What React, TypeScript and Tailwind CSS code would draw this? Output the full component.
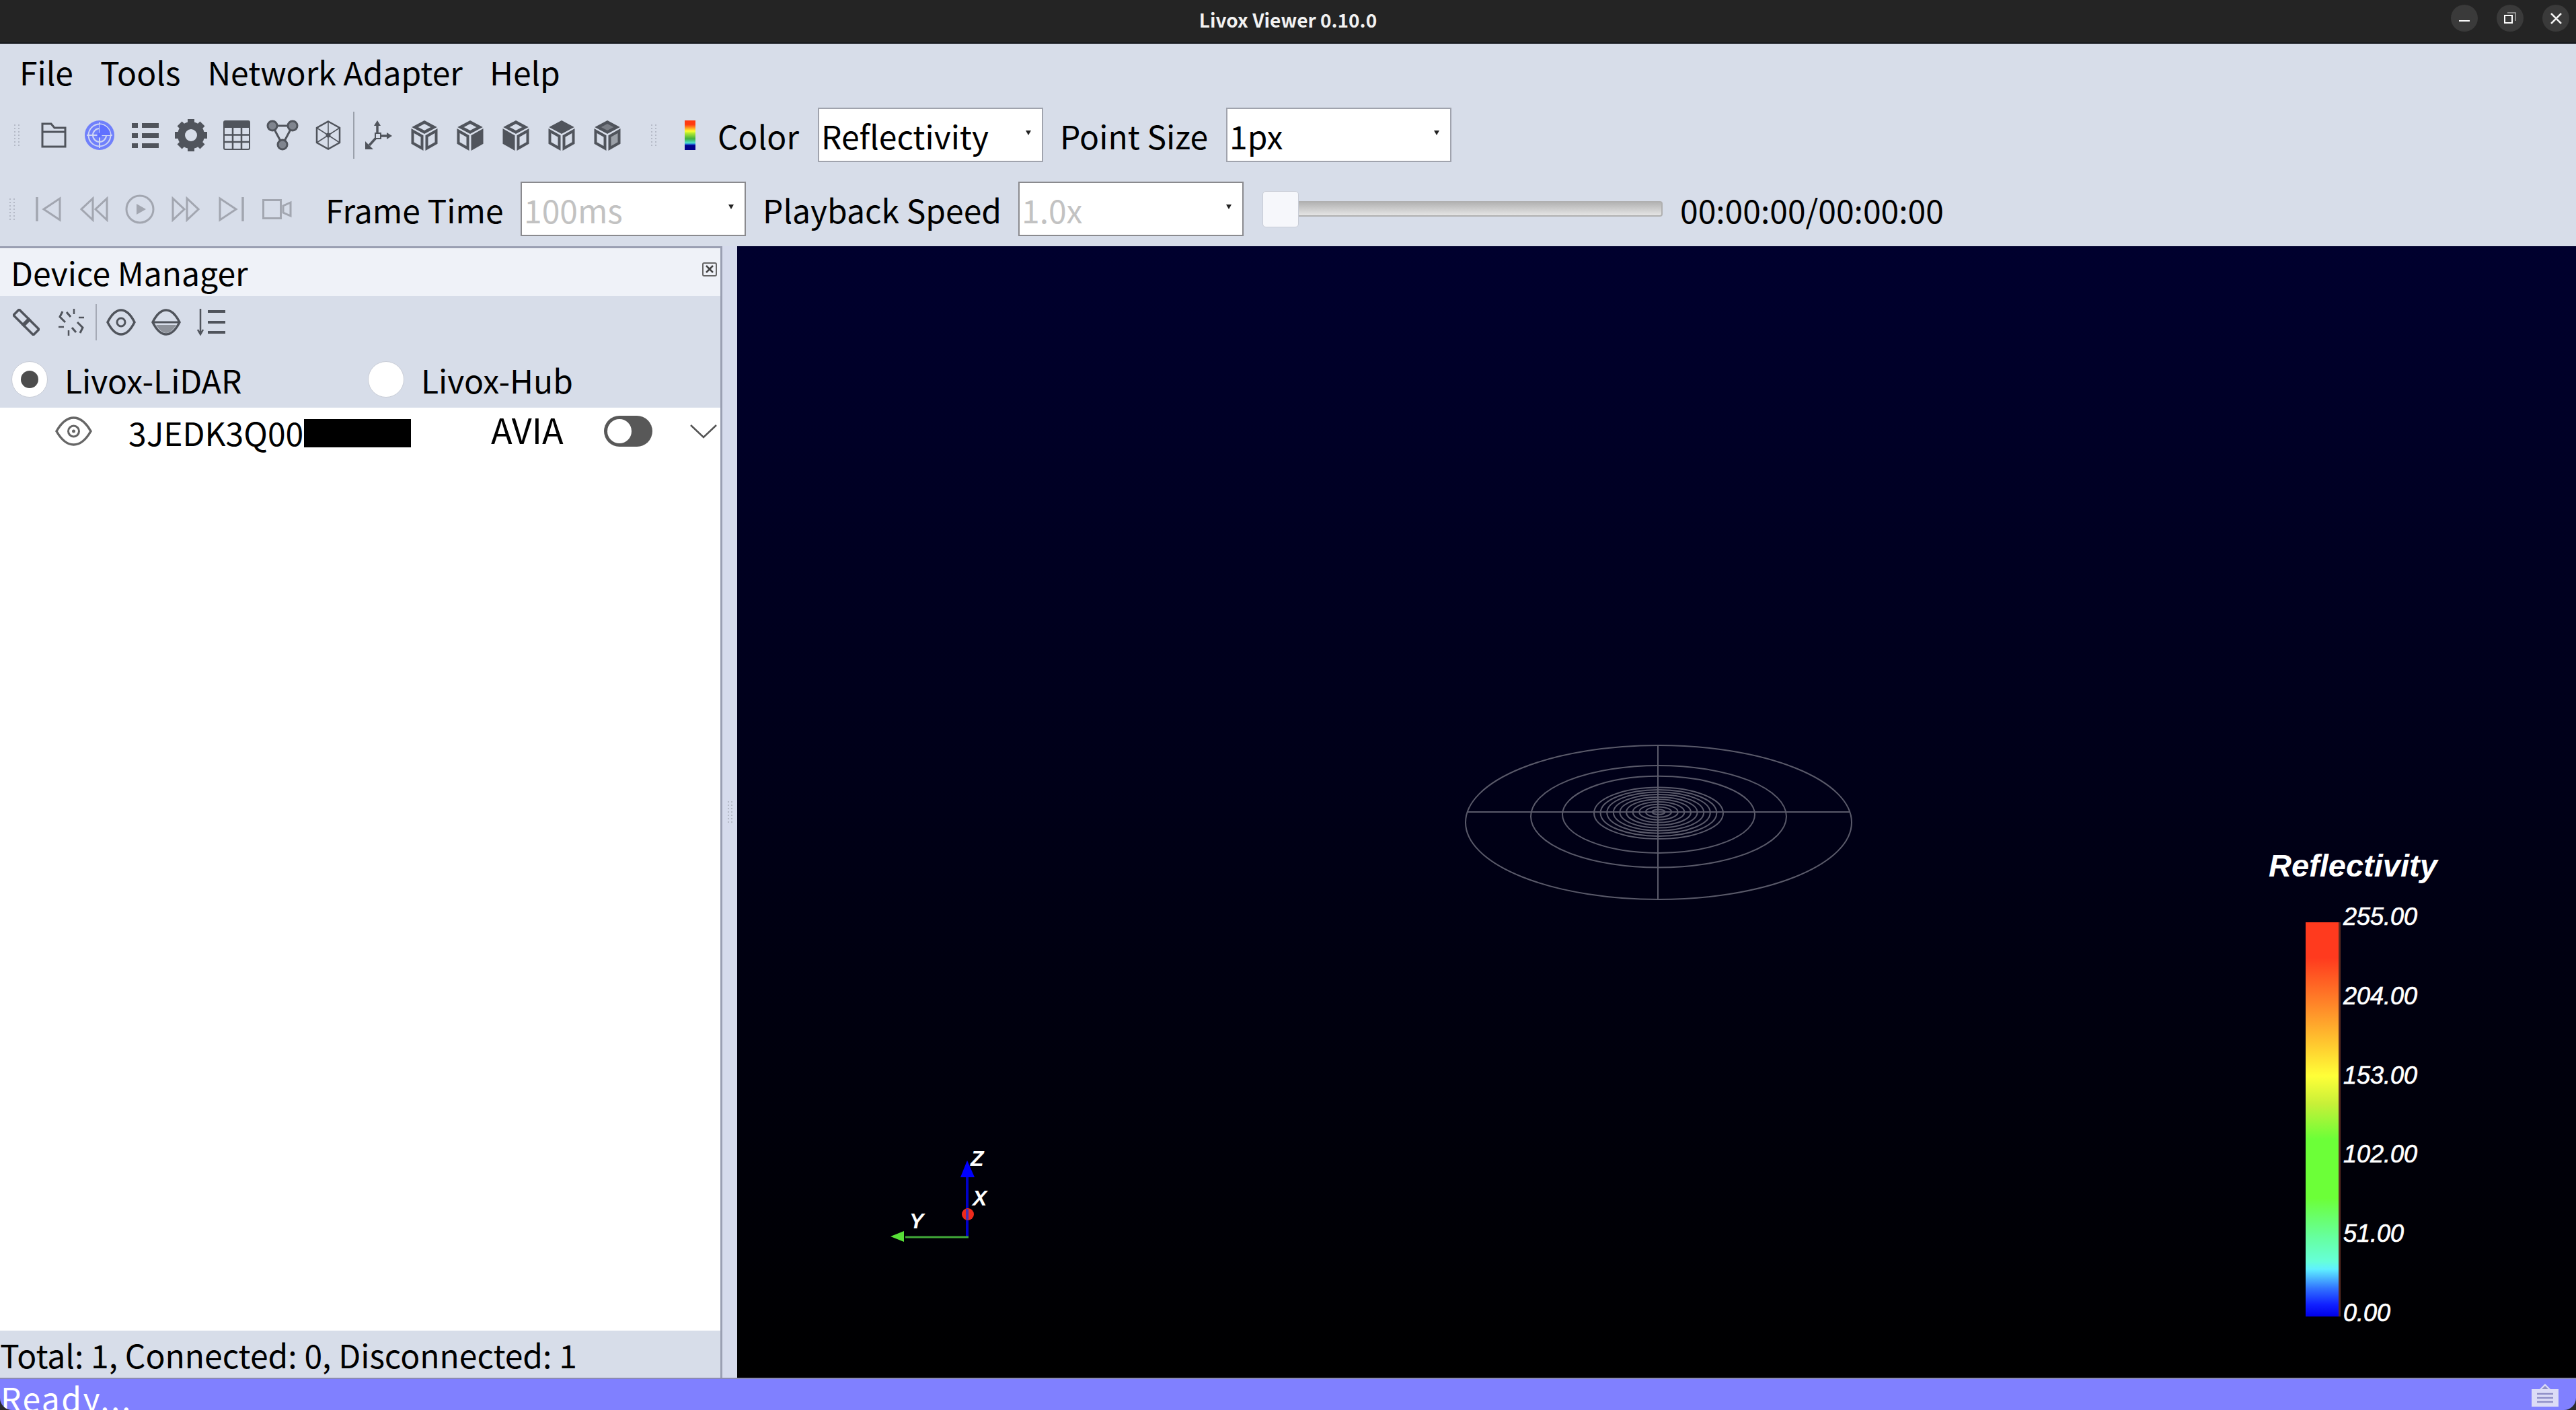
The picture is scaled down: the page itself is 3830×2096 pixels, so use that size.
import React from "react";

const D = "#50545c";
const G = "#a2a6b0";

function Svg({ w, h, children, className }: { w: number; h: number; children: React.ReactNode; className?: string }) {
  return (
    <svg width={w} height={h} viewBox={`0 0 ${w} ${h}`} fill="none" className={className}>
      {children}
    </svg>
  );
}

const Folder = () => (
  <Svg w={38} h={38}>
    <path d="M2 2H15L20 8H36V36H2Z M2 14H36" stroke={D} strokeWidth="3" />
  </Svg>
);
const Radar = () => (
  <Svg w={44} h={44}>
    <circle cx="22" cy="22" r="22" fill="#7080fb" />
    <circle cx="22" cy="22" r="16.5" stroke="#cfd6f4" strokeWidth="2" />
    <circle cx="22" cy="22" r="10" stroke="#cfd6f4" strokeWidth="2" />
    <path d="M22 3V41M3 22H41" stroke="#cfd6f4" strokeWidth="2" />
    <path d="M22 6A16 16 0 0 1 38 22H22Z" fill="#6070ff" />
    <circle cx="22" cy="22" r="3.5" fill="#6070ff" />
  </Svg>
);
const ListIcon = () => (
  <Svg w={40} h={38}>
    {[1, 16, 31].map((y) => (
      <g key={y} fill={D}>
        <rect x="0" y={y} width="9" height="7" />
        <rect x="15" y={y} width="25" height="7" />
      </g>
    ))}
  </Svg>
);
const Gear = () => (
  <Svg w={48} h={48}>
    {[0, 45, 90, 135, 180, 225, 270, 315].map((a) => (
      <rect key={a} x="19" y="0" width="10" height="12" fill={D} transform={`rotate(${a} 24 24)`} />
    ))}
    <circle cx="24" cy="24" r="14.5" stroke={D} strokeWidth="11" />
  </Svg>
);
const Table = () => (
  <Svg w={40} h={44}>
    <rect x="1" y="1" width="38" height="42" rx="2" stroke={D} strokeWidth="2" />
    <rect x="1" y="1" width="38" height="10" fill={D} />
    <path d="M14 11V43M27 11V43M1 21.5H39M1 32H39" stroke={D} strokeWidth="2.5" />
  </Svg>
);
const Net = () => (
  <Svg w={48} h={46}>
    <path d="M9 9H39L24 37Z" stroke={D} strokeWidth="3" />
    <circle cx="9" cy="9" r="7" stroke={D} strokeWidth="3" fill="#80858f" />
    <circle cx="39" cy="9" r="7" stroke={D} strokeWidth="3" fill="#80858f" />
    <circle cx="24" cy="37" r="7" stroke={D} strokeWidth="3" fill="#80858f" />
  </Svg>
);
const Hex = () => (
  <Svg w={38} h={44}>
    <path d="M19 1.5L36 11V33L19 42.5L2 33V11Z" stroke={D} strokeWidth="2.5" />
    <path d="M19 1.5V42.5M2 11L36 33M36 11L2 33" stroke={D} strokeWidth="1.5" />
    <circle cx="19" cy="22" r="3.5" fill={D} />
  </Svg>
);
const Axes3 = () => (
  <Svg w={40} h={44}>
    <path d="M18 6V19M22 23H34M16 26L6 37" stroke={D} strokeWidth="3.5" />
    <path d="M18 0L23 8H13Z M40 23L32 18V28Z M0 43V31L12 43Z" fill={D} />
    <rect x="15" y="19" width="8" height="8" stroke={D} strokeWidth="2" />
  </Svg>
);
function Cube({ v }: { v: "none" | "right" | "left" | "top" | "mix" }) {
  return (
    <Svg w={40} h={46}>
      <path
        d="M20 3.5L34 11L20 18.5L6 11Z"
        stroke={D}
        strokeWidth="4.5"
        fill={v === "top" ? D : v === "mix" ? "#7a7e86" : "none"}
      />
      <path d="M2.5 16.5L16.5 24.5V42.5L2.5 34.5Z" stroke={D} strokeWidth="4" fill={v === "left" ? D : "none"} />
      <path d="M37.5 16.5L23.5 24.5V42.5L37.5 34.5Z" stroke={D} strokeWidth="4" fill={v === "right" ? D : v === "mix" ? "#9ba0a8" : "none"} />
    </Svg>
  );
}
const SkipStart = () => (
  <Svg w={38} h={38}>
    <path d="M2 1V37" stroke={G} strokeWidth="3.5" />
    <path d="M36 3V35L12 19Z" stroke={G} strokeWidth="3" />
  </Svg>
);
const Rewind = () => (
  <Svg w={42} h={38}>
    <path d="M19 3V35L2 19Z M40 3V35L23 19Z" stroke={G} strokeWidth="3" />
  </Svg>
);
const Play = () => (
  <Svg w={44} h={44}>
    <circle cx="22" cy="22" r="20" stroke={G} strokeWidth="3" />
    <path d="M17 14L31 22L17 30Z" fill={G} />
  </Svg>
);
const Forward = () => (
  <Svg w={42} h={38}>
    <path d="M2 3V35L19 19Z M23 3V35L40 19Z" stroke={G} strokeWidth="3" />
  </Svg>
);
const SkipEnd = () => (
  <Svg w={38} h={38}>
    <path d="M36 1V37" stroke={G} strokeWidth="3.5" />
    <path d="M2 3V35L26 19Z" stroke={G} strokeWidth="3" />
  </Svg>
);
const Camera = () => (
  <Svg w={44} h={30}>
    <rect x="1.5" y="1.5" width="26" height="27" stroke={G} strokeWidth="3" />
    <path d="M42 5V25L31 20V10Z" stroke={G} strokeWidth="3" />
  </Svg>
);
const Link = () => (
  <Svg w={40} h={40}>
    <rect x="2" y="7" width="22" height="12" transform="rotate(45 13 13)" stroke={D} strokeWidth="3.5" />
    <rect x="16" y="21" width="22" height="12" transform="rotate(45 27 27)" stroke={D} strokeWidth="3.5" />
  </Svg>
);
const Unlink = () => (
  <Svg w={40} h={40}>
    <path d="M7 4L3 12L11 20M19 12L13 5" stroke={D} strokeWidth="3" />
    <path d="M33 36L37 28L29 20M21 28L27 35" stroke={D} strokeWidth="3" />
    <path d="M24 0V8M39 13H31M1 27H9M16 32V40" stroke={D} strokeWidth="2.5" />
  </Svg>
);
const EyeSmall = ({ half }: { half?: boolean }) => (
  <Svg w={44} h={40}>
    <path d="M2 20C8 8 15 2 22 2C29 2 36 8 42 20C36 32 29 38 22 38C15 38 8 32 2 20Z" stroke={D} strokeWidth="3.5" />
    {half ? (
      <>
        <path d="M2 20H42" stroke={D} strokeWidth="3" />
        <path d="M7 24H37C32 32 27 36 22 36C17 36 12 32 7 24Z" fill="#8e929a" />
      </>
    ) : (
      <>
        <circle cx="22" cy="20" r="6" stroke={D} strokeWidth="3" />
      </>
    )}
  </Svg>
);
const Sort = () => (
  <Svg w={42} h={40}>
    <path d="M5 0V37M1 31L5 38L9 31" stroke={D} strokeWidth="2.5" />
    <path d="M16 4H42M16 20H42M16 35H42" stroke={D} strokeWidth="4" />
  </Svg>
);
const Eye = () => (
  <Svg w={55} h={44}>
    <path d="M2 22C10 8 18 2 27.5 2C37 2 45 8 53 22C45 36 37 42 27.5 42C18 42 10 36 2 22Z" stroke="#666" strokeWidth="3.5" />
    <circle cx="27.5" cy="22" r="8" stroke="#666" strokeWidth="3" />
    <circle cx="27.5" cy="22" r="2.5" fill="#666" />
  </Svg>
);
const Arrow = () => (
  <Svg w={8} h={8}>
    <path d="M0 1H8L4 8Z" fill="#222" />
  </Svg>
);

function Grip({ className }: { className?: string }) {
  return (
    <div className={`grid grid-cols-2 gap-x-[3px] gap-y-[3px] ${className ?? ""}`}>
      {Array.from({ length: 14 }).map((_, i) => (
        <span key={i} className="block w-[2px] h-[2px] bg-[#b4b9c6]" />
      ))}
    </div>
  );
}

function Cell({ children }: { children: React.ReactNode }) {
  return <div className="w-[68px] shrink-0 flex items-center justify-center">{children}</div>;
}
function SmallCell({ children }: { children: React.ReactNode }) {
  return <div className="w-[67px] shrink-0 flex items-center justify-center">{children}</div>;
}

function Combo({ value, disabled, border }: { value: string; disabled?: boolean; border: string }) {
  return (
    <div className={`w-[335px] h-[81px] shrink-0 bg-white border-2 ${border} flex items-center justify-between pl-[3px] pr-[16px]`}>
      <span className={disabled ? "text-[#c2c2c2]" : "text-black"}>{value}</span>
      <span className="-mt-[8px] flex">
        <Arrow />
      </span>
    </div>
  );
}

const rings = [287, 190, 143, 96, 86.4, 76.8, 67.2, 57.6, 48, 38.4, 28.8, 19.2, 9.6];

export default function App() {
  return (
    <div
      className="w-screen h-screen flex flex-col overflow-hidden bg-[#2a2a2a] text-[48px] leading-none text-black"
      style={{ fontFamily: '"Noto Sans CJK SC", "Noto Sans", sans-serif' }}
    >
      {/* title bar */}
      <div className="h-[65px] shrink-0 bg-[#242424] border-b-2 border-[#15181c] grid grid-cols-[1fr_auto_1fr] items-center">
        <div />
        <div className="text-[28px] font-bold text-[#f2f2f2] -mt-[6px]">Livox Viewer 0.10.0</div>
        <div className="flex justify-end gap-[28px] pr-[10px] -mt-[9px]">
          <div className="w-[40px] h-[40px] rounded-full bg-[#3a3a3a] flex items-center justify-center">
            <Svg w={16} h={16}><path d="M0 12H16" stroke="#fff" strokeWidth="2" /></Svg>
          </div>
          <div className="w-[40px] h-[40px] rounded-full bg-[#3a3a3a] flex items-center justify-center">
            <Svg w={18} h={18}>
              <path d="M5 1H17V13" stroke="#aaa" strokeWidth="1.5" />
              <rect x="1" y="5" width="11" height="11" stroke="#fff" strokeWidth="2" />
            </Svg>
          </div>
          <div className="w-[40px] h-[40px] rounded-full bg-[#3a3a3a] flex items-center justify-center">
            <Svg w={17} h={17}><path d="M1 1L16 16M16 1L1 16" stroke="#eee" strokeWidth="2.5" /></Svg>
          </div>
        </div>
      </div>

      {/* menu + toolbars */}
      <div className="h-[301px] shrink-0 bg-[#d7dde9]">
        <div className="h-[83px] flex items-center pl-[9px]">
          {["File", "Tools", "Network Adapter", "Help"].map((m) => (
            <span key={m} className="px-[20px] -mt-[2px]">{m}</span>
          ))}
        </div>

        <div className="h-[81px] mt-[12px] flex items-center">
          <Grip className="ml-[21px] w-[9px] shrink-0" />
          <div className="ml-[16px] flex">
            <Cell><Folder /></Cell>
            <Cell><Radar /></Cell>
            <Cell><ListIcon /></Cell>
            <Cell><Gear /></Cell>
            <Cell><Table /></Cell>
            <Cell><Net /></Cell>
            <Cell><Hex /></Cell>
          </div>
          <div className="ml-[3px] w-[2px] h-[70px] bg-[#9aa0ab] shrink-0" />
          <div className="ml-[2px] flex">
            <Cell><Axes3 /></Cell>
            <Cell><Cube v="none" /></Cell>
            <Cell><Cube v="right" /></Cell>
            <Cell><Cube v="left" /></Cell>
            <Cell><Cube v="top" /></Cell>
            <Cell><Cube v="mix" /></Cell>
          </div>
          <Grip className="ml-[31px] w-[8px] shrink-0" />
          <div className="ml-[42px] w-[16px] h-[44px] shrink-0 bg-[linear-gradient(to_bottom,#ff3a10_0%,#ff3a10_14%,#ff9020_24%,#ffff30_36%,#b0e830_44%,#40b040_62%,#50e0d0_76%,#1040d0_82%,#00008a_84%,#00008a_100%)]" />
          <span className="ml-[33px] w-[149px] shrink-0">Color</span>
          <Combo value="Reflectivity" border="border-[#a0a3ad]" />
          <span className="ml-[25px] w-[247px] shrink-0">Point Size</span>
          <Combo value="1px" border="border-[#a0a3ad]" />
        </div>

        <div className="h-[81px] mt-[29px] flex items-center">
          <Grip className="ml-[14px] w-[8px] shrink-0" />
          <div className="ml-[16px] flex">
            <Cell><SkipStart /></Cell>
            <Cell><Rewind /></Cell>
            <Cell><Play /></Cell>
            <Cell><Forward /></Cell>
            <Cell><SkipEnd /></Cell>
            <Cell><Camera /></Cell>
          </div>
          <span className="ml-[38px] w-[290px] shrink-0">Frame Time</span>
          <Combo value="100ms" disabled border="border-[#8a8a8e]" />
          <span className="ml-[25px] w-[380px] shrink-0">Playback Speed</span>
          <Combo value="1.0x" disabled border="border-[#8a8a8e]" />
          <div className="ml-[28px] w-[595px] shrink-0 flex items-center">
            <div className="w-[54px] h-[54px] shrink-0 rounded-[5px] bg-[#f6f7fb] border border-[#c8ccd6]" />
            <div className="flex-1 h-[23px] -mt-[1px] rounded-r-[4px] border-y-2 border-r-2 border-[#b0b0b0] bg-[linear-gradient(to_bottom,#b4b4b4,#e4e4e4)]" />
          </div>
          <span className="ml-[26px]">00:00:00/00:00:00</span>
        </div>
      </div>

      {/* main area */}
      <div className="flex-1 min-h-0 flex">
        <div className="w-[1074px] shrink-0 flex flex-col border-t-[3px] border-r-[3px] border-[#9a9fb2]">
          <div className="h-[71px] shrink-0 bg-[#eff2f8] flex items-center justify-between pl-[16px] pr-[5px]">
            <span className="-mt-[2px]">Device Manager</span>
            <div className="w-[22px] h-[21px] -mt-[9px] border-2 border-[#666] rounded-[3px] flex items-center justify-center">
              <Svg w={12} h={12}><path d="M1 1L11 11M11 1L1 11" stroke="#444" strokeWidth="2.5" /></Svg>
            </div>
          </div>
          <div className="h-[166px] shrink-0 bg-[#d7dde9] pt-[12px]">
            <div className="h-[54px] flex items-center">
              <div className="ml-[5px] flex">
                <SmallCell><Link /></SmallCell>
                <SmallCell><Unlink /></SmallCell>
              </div>
              <div className="ml-[3px] w-[2px] h-[54px] bg-[#a5aab6] shrink-0" />
              <div className="ml-[2px] flex">
                <SmallCell><EyeSmall /></SmallCell>
                <SmallCell><EyeSmall half /></SmallCell>
                <SmallCell><Sort /></SmallCell>
              </div>
            </div>
            <div className="h-[54px] mt-[31px] flex items-center">
              <div className="ml-[17px] w-[54px] h-[54px] shrink-0 rounded-full bg-white border border-[#c8ccd6] flex items-center justify-center">
                <div className="w-[26px] h-[26px] rounded-full bg-[#4d4d4d]" />
              </div>
              <span className="ml-[25px] w-[451px] shrink-0">Livox-LiDAR</span>
              <div className="w-[54px] h-[54px] shrink-0 rounded-full bg-white border border-[#c8ccd6]" />
              <span className="ml-[25px]">Livox-Hub</span>
            </div>
          </div>
          <div className="flex-1 bg-white min-h-0">
            <div className="mt-[12px] h-[46px] flex items-center">
              <div className="ml-[82px] shrink-0 flex"><Eye /></div>
              <span className="ml-[54px] w-[261px] shrink-0 mt-[2px]">3JEDK3Q00</span>
              <div className="w-[159px] h-[42px] mt-[6px] bg-black shrink-0" />
              <span className="ml-[119px] w-[168px] shrink-0 -mt-[6px] text-[52px]">AVIA</span>
              <div className="w-[72px] h-[46px] shrink-0 rounded-full bg-[#585858] flex items-center pl-[5px]">
                <div className="w-[36px] h-[36px] rounded-full bg-white" />
              </div>
              <div className="ml-[56px] shrink-0 flex">
                <Svg w={40} h={22}><path d="M1 2L20 20L39 2" stroke="#555" strokeWidth="2.5" /></Svg>
              </div>
            </div>
          </div>
          <div className="h-[70px] shrink-0 bg-[#d7dde9] flex items-center">
            <span className="">Total: 1, Connected: 0, Disconnected: 1</span>
          </div>
        </div>
        <div className="w-[22px] shrink-0 bg-[#d6dbec] flex items-center justify-center">
          <Grip />
        </div>

        {/* 3D viewport */}
        <div className="flex-1 relative overflow-hidden bg-[linear-gradient(to_bottom,#00002e,#000000)]">
          <svg className="absolute inset-0 w-full h-full" viewBox="1096 366 2734 1682" fill="none">
            <g stroke="#5a5a6a" strokeWidth="2">
              {rings.map((r) => (
                <ellipse key={r} cx={2466} cy={1207 + (r / 287) * (r / 287) * 15.5} rx={r} ry={r * 0.399} />
              ))}
              <path d="M2182 1207H2750M2465 1108V1337" />
            </g>
            <path d="M1438 1750V1838" stroke="#0000c8" strokeWidth="4" />
            <path d="M1438 1725L1449 1750H1428Z" fill="#0000ff" />
            <path d="M1346 1839H1440" stroke="#40a838" strokeWidth="3" />
            <path d="M1324 1838L1344 1830V1846Z" fill="#58e038" />
            <circle cx="1439" cy="1805" r="9" fill="#ee2a1c" />
            <path d="M1438 1797V1813" stroke="#5030b0" strokeWidth="4" />
            <g fill="#fff" fontFamily="Liberation Sans, sans-serif" fontSize="32" fontStyle="italic" fontWeight="700">
              <text x="1443" y="1733">Z</text>
              <text x="1446" y="1792">X</text>
              <text x="1352" y="1826">Y</text>
            </g>
          </svg>
          <div
            className="absolute left-[2277px] top-[897px] text-white italic"
            style={{ fontFamily: '"Liberation Sans", Arial, sans-serif' }}
          >
            <div className="text-[47px] leading-[48px] font-bold">Reflectivity</div>
            <div className="mt-[37px] flex">
              <div className="ml-[55px] mt-[23px] w-[52px] h-[586px] border-r-[3px] border-[#5a2a20] bg-[linear-gradient(to_bottom,#ff3a1e_0%,#ff3a1e_9%,#ff8028_20%,#ffd030_32%,#ffff38_39%,#c8f038_46%,#6cff38_55%,#6cff38_70%,#66ffa0_80%,#66ffd8_86%,#5ff0ff_88%,#3070ff_93%,#1020ff_97%,#0000e8_100%)]" />
              <div className="ml-[4px] h-[619px] flex flex-col justify-between text-[36px] leading-[30px] [-webkit-text-stroke:0.7px_white]">
                {["255.00", "204.00", "153.00", "102.00", "51.00", "0.00"].map((t) => (
                  <span key={t}>{t}</span>
                ))}
              </div>
            </div>
          </div>
        </div>
      </div>

      {/* status bar */}
      <div className="h-[48px] shrink-0 bg-[#8080ff] border-t-[2px] border-[#8a8ab4] rounded-b-[18px] flex items-start justify-between overflow-hidden pl-[1px] pr-[26px]">
        <span className="text-white text-[48px] leading-[46px] mt-[4px] tracking-[2.5px]">Ready...</span>
        <div className="mt-[6px] flex">
          <Svg w={40} h={35}>
            <path d="M0 9H12L20 1L28 9H40V35H0Z" fill="#dcdcf6" />
            <path d="M15 9L20 4L25 9Z" fill="#9090c8" />
            <path d="M8 16H32M8 22H32M8 28H32" stroke="#9090c8" strokeWidth="2.5" />
          </Svg>
        </div>
      </div>
    </div>
  );
}
